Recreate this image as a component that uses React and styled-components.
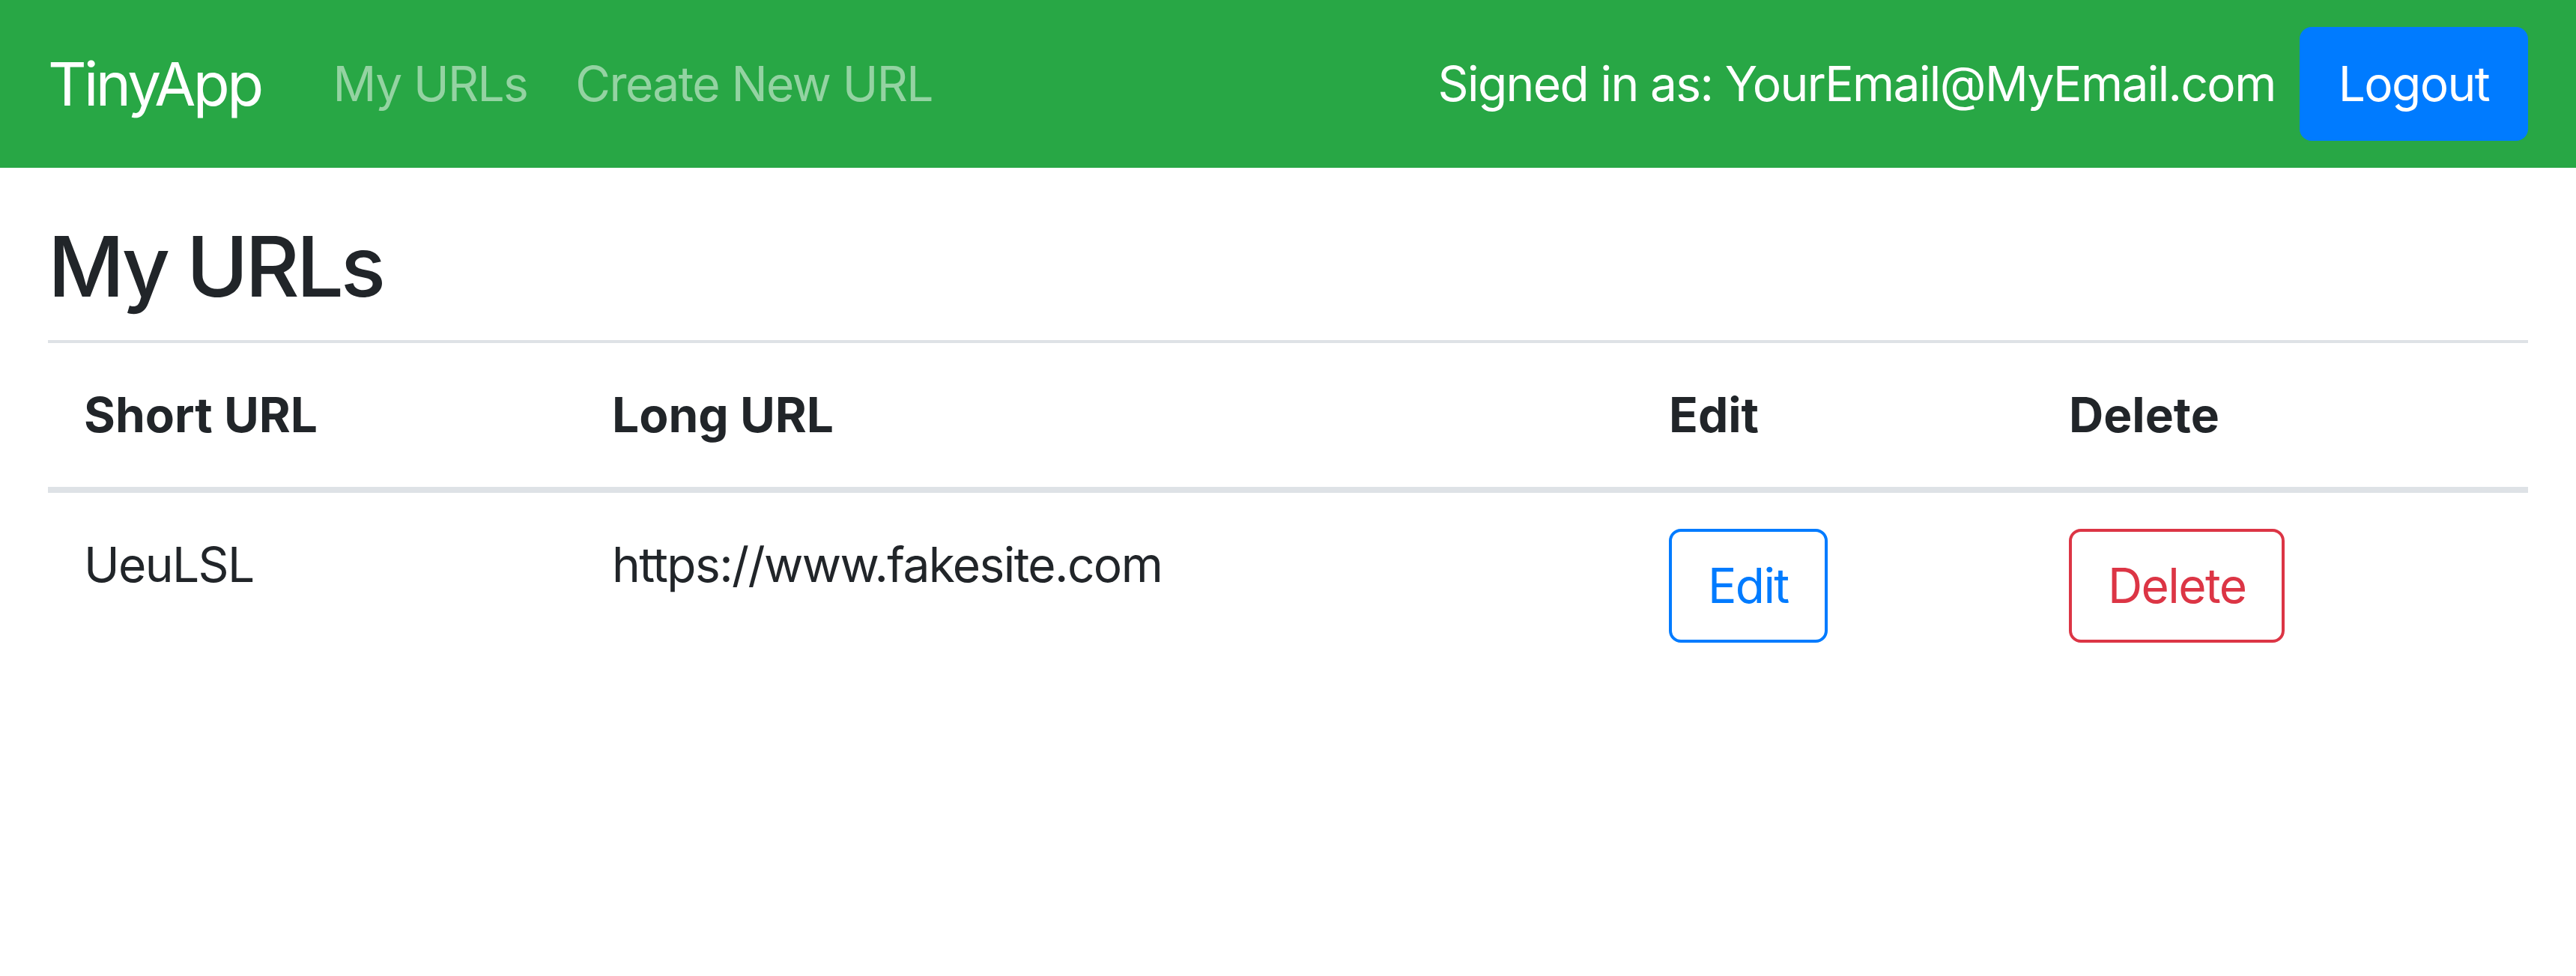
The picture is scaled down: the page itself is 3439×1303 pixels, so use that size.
import React from "react";
import styled, { createGlobalStyle } from "styled-components";

const GlobalStyle = createGlobalStyle`
  html, body {
    margin: 0;
    padding: 0;
    background: #ffffff;
  }
  body {
    font-family: Inter, "Noto Sans", "Liberation Sans", sans-serif;
    font-size: 64px;
    line-height: 1.5;
    letter-spacing: -1.6px;
    color: #212529;
  }
  * { box-sizing: border-box; }
`;

const Navbar = styled.nav`
  display: flex;
  align-items: center;
  justify-content: space-between;
  padding: 32px 64px;
  background: #28a745;
`;

const NavLeft = styled.div`
  display: flex;
  align-items: center;
`;

const Brand = styled.a`
  font-size: 80px;
  line-height: 1.5;
  letter-spacing: -3.6px;
  padding: 19px 0;
  margin-right: 64px;
  color: #ffffff;
  text-decoration: none;
  white-space: nowrap;
`;

const NavList = styled.ul`
  display: flex;
  list-style: none;
  margin: 0;
  padding: 0;
`;

const NavLink = styled.a`
  display: block;
  padding: 32px 32px;
  color: rgba(255, 255, 255, 0.5);
  text-decoration: none;
  white-space: nowrap;
`;

const NavRight = styled.div`
  display: flex;
  align-items: center;
  gap: 32px;
`;

const NavText = styled.span`
  padding: 32px 0;
  color: #ffffff;
  white-space: nowrap;
`;

const Button = styled.button`
  display: inline-block;
  font-family: inherit;
  font-size: 64px;
  line-height: 1.5;
  letter-spacing: -1.6px;
  padding: 24px 48px;
  border-radius: 16px;
  border: 4px solid ${(p) => p.$color};
  background: ${(p) => (p.$solid ? p.$color : "transparent")};
  color: ${(p) => (p.$solid ? "#ffffff" : p.$color)};
  cursor: pointer;
  white-space: nowrap;
`;

const Main = styled.main`
  padding: 0 64px;
`;

const Heading = styled.h3`
  font-size: 112px;
  font-weight: 500;
  line-height: 1.2;
  letter-spacing: -4.2px;
  margin: 64px 0 32px;
`;

const Table = styled.table`
  width: 100%;
  border-collapse: collapse;
  table-layout: fixed;
`;

const Th = styled.th`
  width: ${(p) => p.$w || "auto"};
  text-align: left;
  font-weight: 700;
  letter-spacing: 0;
  padding: 48px;
  border-top: 4px solid #dee2e6;
  border-bottom: 8px solid #dee2e6;
  vertical-align: bottom;
`;

const Td = styled.td`
  padding: 48px;
  border-top: 4px solid #dee2e6;
  vertical-align: top;
`;

const rows = [{ short: "UeuLSL", long: "https://www.fakesite.com" }];

export default function App() {
  return (
    <>
      <GlobalStyle />
      <Navbar>
        <NavLeft>
          <Brand href="#">TinyApp</Brand>
          <NavList>
            <li><NavLink href="#">My URLs</NavLink></li>
            <li><NavLink href="#">Create New URL</NavLink></li>
          </NavList>
        </NavLeft>
        <NavRight>
          <NavText>Signed in as: YourEmail@MyEmail.com</NavText>
          <Button $color="#007bff" $solid>Logout</Button>
        </NavRight>
      </Navbar>
      <Main>
        <Heading>My URLs</Heading>
        <Table>
          <thead>
            <tr>
              <Th $w="705px">Short URL</Th>
              <Th $w="1411px">Long URL</Th>
              <Th $w="534px">Edit</Th>
              <Th>Delete</Th>
            </tr>
          </thead>
          <tbody>
            {rows.map((r) => (
              <tr key={r.short}>
                <Td>{r.short}</Td>
                <Td>{r.long}</Td>
                <Td><Button $color="#007bff">Edit</Button></Td>
                <Td><Button $color="#dc3545">Delete</Button></Td>
              </tr>
            ))}
          </tbody>
        </Table>
      </Main>
    </>
  );
}
